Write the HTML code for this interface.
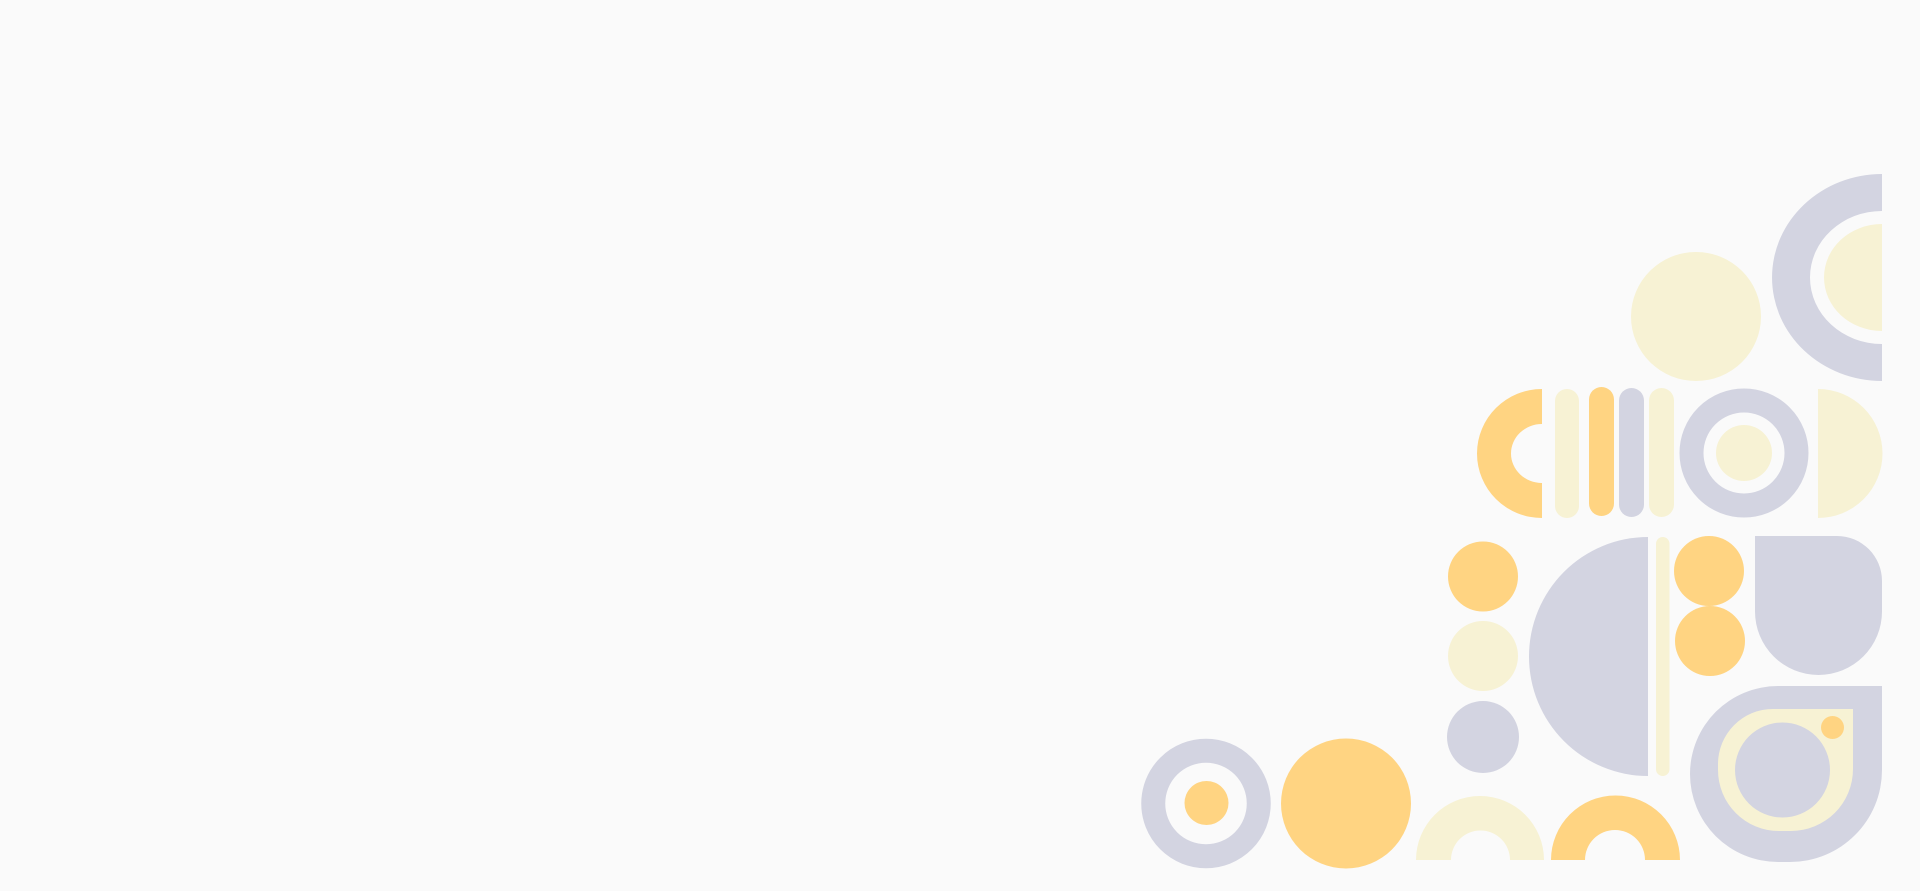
<!DOCTYPE html>
<html><head><meta charset="utf-8"><style>
html,body{margin:0;padding:0;width:1920px;height:891px;overflow:hidden;background:#fafafa;}
.a{position:absolute;}
</style></head><body>
<div class="a" style="left:1755px;top:536px;width:127px;height:139px;background:#d3d4e1;border-radius:0 45px 63.5px 63.5px;"></div>
<div class="a" style="left:1690px;top:686px;width:192px;height:176px;background:#d3d4e1;border-radius:88px 0 92px 88px;"></div>
<div class="a" style="left:1718px;top:709px;width:135px;height:122px;background:#f7f2d4;border-radius:55px 0 62px 61px;"></div>
<svg class="a" style="left:0;top:0" width="1920" height="891" viewBox="0 0 1920 891">
<path d="M1882,174 A110,103.5 0 0 0 1882,381 L1882,344 A72,66.5 0 0 1 1882,211 Z" fill="#d3d4e1"/>
<path d="M1882,224 A58,53.5 0 0 0 1882,331 Z" fill="#f7f2d4"/>
<ellipse cx="1696" cy="316.5" rx="65" ry="64.5" fill="#f7f2d4"/>
<path d="M1542,389 A65,64.5 0 0 0 1542,518 L1542,483 A31,29.5 0 0 1 1542,424 Z" fill="#ffd482"/>
<rect x="1555" y="389" width="24" height="129" rx="12" fill="#f7f2d4"/>
<rect x="1589" y="387" width="25" height="129" rx="12.5" fill="#ffd482"/>
<rect x="1619" y="388" width="25" height="129" rx="12.5" fill="#d3d4e1"/>
<rect x="1649" y="388" width="25" height="129" rx="12.5" fill="#f7f2d4"/>
<circle cx="1744" cy="453" r="52.5" fill="none" stroke="#d3d4e1" stroke-width="24"/>
<circle cx="1744" cy="453" r="28" fill="#f7f2d4"/>
<path d="M1818,389 A64.5,64.5 0 0 1 1818,518 Z" fill="#f7f2d4"/>
<circle cx="1483" cy="576.5" r="35" fill="#ffd482"/>
<circle cx="1483" cy="656" r="35" fill="#f7f2d4"/>
<circle cx="1483" cy="737" r="36" fill="#d3d4e1"/>
<path d="M1648,537 A119,119.5 0 0 0 1648,776 Z" fill="#d3d4e1"/>
<rect x="1656" y="537" width="13.5" height="239" rx="6.75" fill="#f7f2d4"/>
<circle cx="1709" cy="571" r="35" fill="#ffd482"/>
<circle cx="1710" cy="641" r="35" fill="#ffd482"/>
<circle cx="1782.5" cy="770" r="47.5" fill="#d3d4e1"/>
<circle cx="1832.5" cy="727.5" r="11.5" fill="#ffd482"/>
<circle cx="1206" cy="803.5" r="52.75" fill="none" stroke="#d3d4e1" stroke-width="24"/>
<circle cx="1206.5" cy="803" r="22" fill="#ffd482"/>
<circle cx="1346" cy="803.5" r="65" fill="#ffd482"/>
<path d="M1416,860 A64,64 0 0 1 1544,860 L1510,860 A29.5,29.5 0 0 0 1451,860 Z" fill="#f7f2d4"/>
<path d="M1551,860 A64.5,64.5 0 0 1 1680,860 L1645,860 A30,30 0 0 0 1585,860 Z" fill="#ffd482"/>
</svg>
</body></html>
